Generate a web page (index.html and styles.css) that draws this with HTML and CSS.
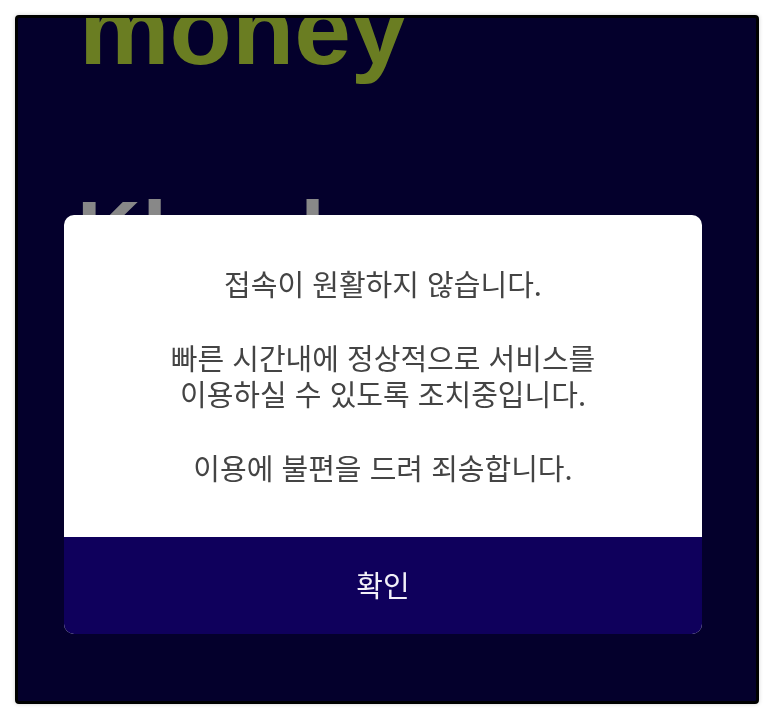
FILE: index.html
```html
<!DOCTYPE html>
<html lang="ko">
<head>
<meta charset="utf-8">
<title>접속 안내</title>
<link rel="stylesheet" href="styles.css">
</head>
<body>
<main class="screen">
  <div class="backdrop">
    <div class="brand">money</div>
    <div class="subtitle">Kleed</div>
  </div>
  <section class="dialog">
    <div class="message">
      <p>접속이 원활하지 않습니다.</p>
      <p>빠른 시간내에 정상적으로 서비스를<br>이용하실 수 있도록 조치중입니다.</p>
      <p>이용에 불편을 드려 죄송합니다.</p>
    </div>
    <button class="confirm" type="button">확인</button>
  </section>
</main>
</body>
</html>
```

FILE: styles.css
```css
* { box-sizing: border-box; }
html, body { height: 100%; }
body {
  margin: 0;
  background: #fff;
  padding: 15px 14px 15px 15px;
  font-family: "Noto Sans CJK KR", "Noto Sans", sans-serif;
}
.screen {
  position: relative;
  height: 689px;
  overflow: hidden;
  background: #04002c;
  border: 3px solid #000;
  border-radius: 4px;
  box-shadow: 0 0 4px rgba(0, 0, 0, .18);
  filter: blur(.5px);
}
.backdrop {
  padding-left: 59px;
  margin-top: -53px;
  font-family: "Liberation Sans", Arial, sans-serif;
  font-weight: 700;
}
.brand {
  margin-left: 2px;
  font-size: 98px;
  line-height: 130px;
  transform: scaleX(1.04);
  transform-origin: left center;
  color: #6a7d22;
}
.subtitle {
  margin-top: 84px;
  font-size: 88px;
  line-height: 106px;
  letter-spacing: 2px;
  color: #888;
}
.dialog {
  position: absolute;
  left: 46px;
  top: 197px;
  width: 638px;
  height: 419px;
  display: flex;
  flex-direction: column;
  border-radius: 10px;
  overflow: hidden;
  background: #fff;
}
.message {
  flex: 1;
  display: flex;
  flex-direction: column;
  gap: 38px;
  padding-top: 50px;
  text-align: center;
  font-size: 29px;
  line-height: 36px;
  color: #444;
}
.message p { margin: 0; }
.confirm {
  height: 97px;
  flex: none;
  border: 0;
  padding: 0 0 3px;
  background: #0f005c;
  color: #f2f0f8;
  font: inherit;
  font-size: 29px;
}
```
